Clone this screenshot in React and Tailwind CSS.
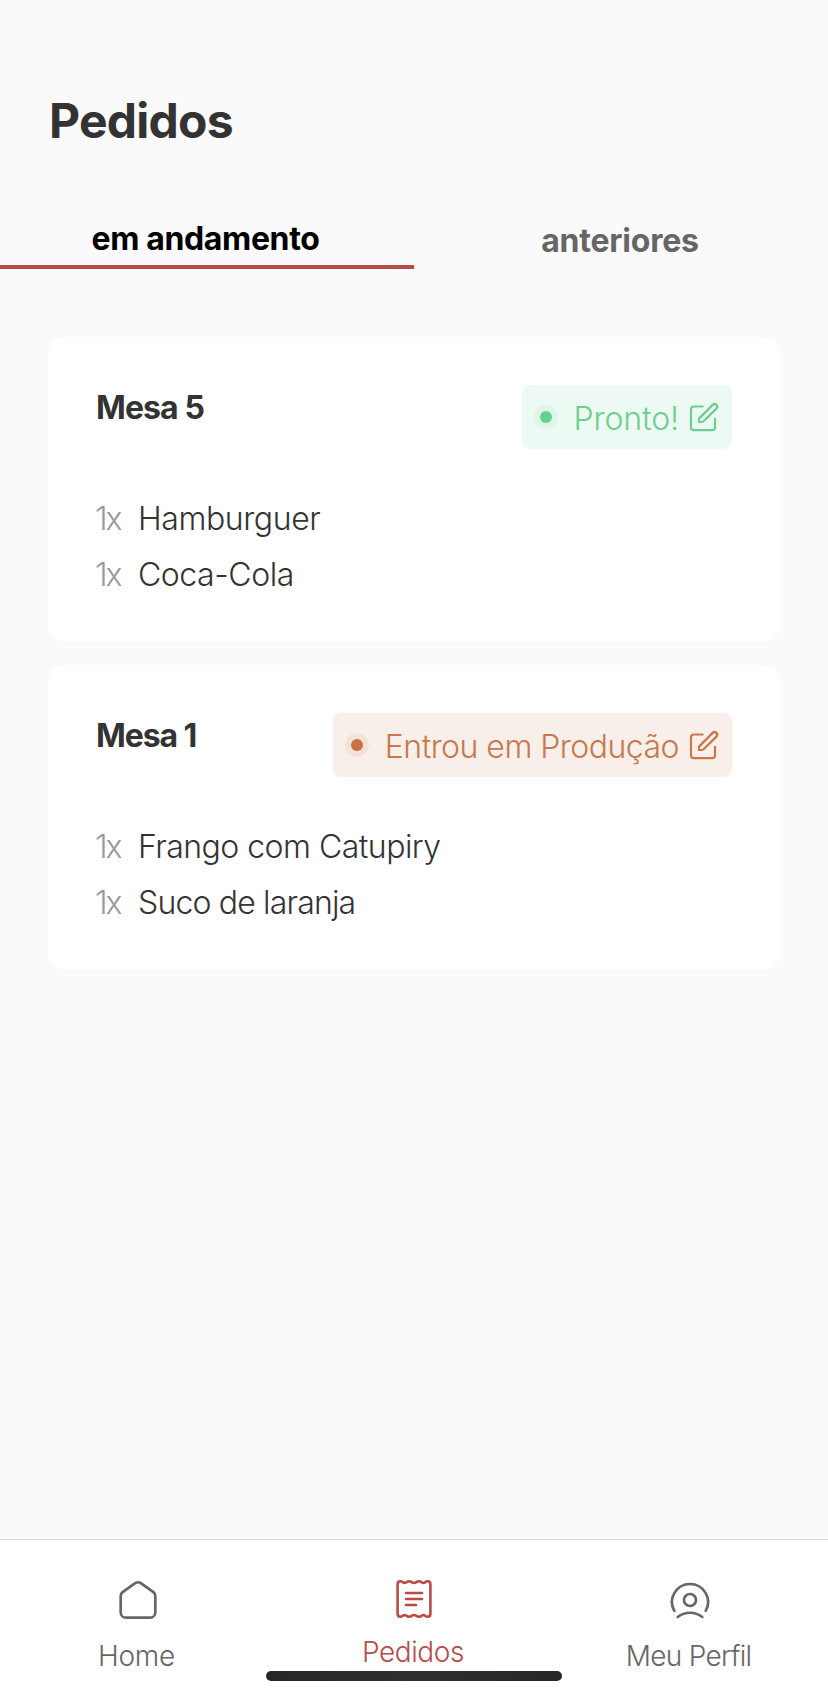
import React from "react";

const orders = [
  {
    table: "Mesa 5",
    tableClass: "tracking-[-0.9px]",
    status: "Pronto!",
    statusClass: "tracking-[-0.1px]",
    badge: "bg-[#edfaf3] text-[#6bcf8f]",
    halo: "bg-[#dff6e8]",
    dot: "bg-[#65d18c]",
    items: [
      { name: "Hamburguer", className: "tracking-[-0.4px]" },
      { name: "Coca-Cola", className: "tracking-[-0.45px]" },
    ],
  },
  {
    table: "Mesa 1",
    tableClass: "tracking-[-1.1px]",
    status: "Entrou em Produção",
    statusClass: "tracking-[-0.52px]",
    badge: "bg-[#f8efeb] text-[#c87849]",
    halo: "bg-[#f3e2d9]",
    dot: "bg-[#cb7040]",
    items: [
      { name: "Frango com Catupiry", className: "tracking-[-0.52px]" },
      { name: "Suco de laranja", className: "tracking-[-0.83px]" },
    ],
  },
];

function EditIcon() {
  return (
    <svg className="h-8 w-8 shrink-0" viewBox="0 0 32 32" fill="none" stroke="currentColor" strokeWidth="2.2" strokeLinecap="round" strokeLinejoin="round">
      <path d="M14.7 5.5H6A3 3 0 0 0 3 8.5V26.2A3 3 0 0 0 6 29.2H24A3 3 0 0 0 27 26.2V17.8" />
      <path d="M11 21V17.6L24.7 3.9A2.6 2.6 0 0 1 28.4 7.6L15.5 20.2Q14.6 21 13.4 21Z" />
    </svg>
  );
}

function HomeIcon() {
  return (
    <svg className="h-12 w-12" viewBox="0 0 48 48" fill="none" stroke="currentColor" strokeWidth="2.7" strokeLinejoin="round">
      <path d="M21.2 7.2 8.6 16.2Q6.7 17.6 6.7 20V36.4A5.3 5.3 0 0 0 12 41.7H36A5.3 5.3 0 0 0 41.3 36.4V20Q41.3 17.6 39.4 16.2L26.8 7.2Q24 5.3 21.2 7.2Z" />
    </svg>
  );
}

function ReceiptIcon() {
  return (
    <svg className="h-12 w-12" viewBox="0 1 48 48" fill="none" stroke="currentColor" strokeWidth="2.6" strokeLinecap="round" strokeLinejoin="round">
      <path d="M7.6 9.2Q7.6 6.2 10.3 6.2C12.8 6.2 12.8 8 14.5 8S17 6.2 19.2 6.2 21.9 8 24 8 26.6 6.2 28.8 6.2 31.6 8 33.5 8 35.2 6.2 37.7 6.2Q40.4 6.2 40.4 9.2V38.8Q40.4 41.8 37.7 41.8C35.2 41.8 35.2 40 33.5 40S31 41.8 28.8 41.8 26.1 40 24 40 21.4 41.8 19.2 41.8 16.4 40 14.5 40 12.8 41.8 10.3 41.8Q7.6 41.8 7.6 38.8Z" />
      <path d="M16 18H32M16 24H32M16 30H26" />
    </svg>
  );
}

function ProfileIcon() {
  return (
    <svg className="h-12 w-12" viewBox="0 -2 48 48" fill="none" stroke="currentColor" strokeWidth="2.7" strokeLinecap="round">
      <path d="M8.3 32.8A18 18 0 1 1 39.7 32.8" />
      <circle cx="24" cy="22" r="6" />
      <path d="M11.7 39A20 20 0 0 1 36.3 39" />
    </svg>
  );
}

function OrderCard({ order }) {
  return (
    <article className="h-[304px] rounded-2xl bg-white p-12">
      <div className="flex items-start justify-between">
        <h2 className={`pt-[3px] text-[32px] leading-10 font-bold text-[#333333] ${order.tableClass}`}>{order.table}</h2>
        <div className={`flex h-16 items-center rounded-lg px-3 ${order.badge}`}>
          <span className={`flex h-6 w-6 items-center justify-center rounded-full ${order.halo}`}>
            <span className={`h-3 w-3 rounded-full ${order.dot}`} />
          </span>
          <span className={`ml-4 pt-1 text-[32px] leading-10 font-light whitespace-nowrap ${order.statusClass}`}>{order.status}</span>
          <span className="ml-[9px]">
            <EditIcon />
          </span>
        </div>
      </div>
      <ul className="mt-[50px] flex flex-col gap-4 text-[32px] leading-10 font-light">
        {order.items.map((item) => (
          <li key={item.name} className="flex">
            <span className="-ml-px w-[43px] tracking-[-2px] text-[#999999]">1x</span>
            <span className={`text-[#333333] ${item.className}`}>{item.name}</span>
          </li>
        ))}
      </ul>
    </article>
  );
}

export default function App() {
  return (
    <div className="flex h-[1697px] w-[828px] flex-col overflow-hidden bg-[#fafafa] font-['Inter',sans-serif]">
      <h1 className="mt-[97px] ml-[49px] h-12 text-[48px] leading-[48px] font-bold tracking-[-0.75px] text-[#333333]">Pedidos</h1>
      <nav className="mt-[72px] grid h-[52px] grid-cols-2 text-center text-[32px] leading-10 font-bold">
        <button className="flex h-[52px] items-start justify-center border-b-4 border-[#b84a48] pt-0.5 pr-[3px] tracking-[-0.37px] text-black">
          em andamento
        </button>
        <button className="flex h-[52px] items-start justify-center pt-1 pr-0.5 tracking-[-0.22px] text-[#666666]">anteriores</button>
      </nav>
      <main className="mx-12 mt-[68px] flex grow flex-col gap-6">
        {orders.map((order) => (
          <OrderCard key={order.table} order={order} />
        ))}
      </main>
      <footer className="relative grid h-[158px] grid-cols-3 border-t border-[#d8d8d8] bg-white text-[28px] leading-8 font-light text-[#666666]">
        <a className="flex flex-col items-center pt-9">
          <HomeIcon />
          <span className="mt-4 pr-[3px] tracking-[-0.3px]">Home</span>
        </a>
        <a className="flex flex-col items-center pt-9 text-[#b84a48]">
          <ReceiptIcon />
          <span className="mt-3 pr-[2px] tracking-[-0.4px]">Pedidos</span>
        </a>
        <a className="flex flex-col items-center pt-9">
          <ProfileIcon />
          <span className="mt-4 pr-[3px] tracking-[-0.7px]">Meu Perfil</span>
        </a>
        <div className="absolute top-[131px] left-[266px] h-[10px] w-[296px] rounded-full bg-linear-to-r from-[#262626] via-[#303030] to-[#262626]" />
      </footer>
    </div>
  );
}
